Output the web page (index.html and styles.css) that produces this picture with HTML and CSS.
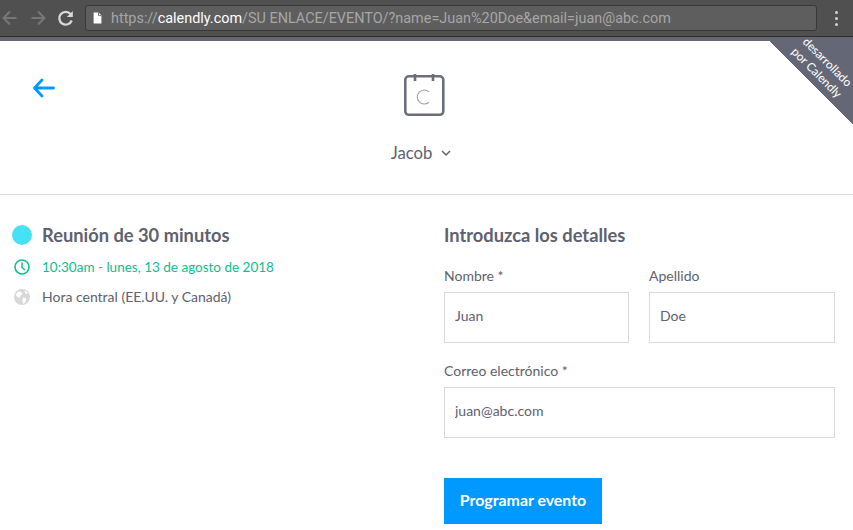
FILE: index.html
```html
<!DOCTYPE html>
<html lang="es">
<head>
<meta charset="utf-8">
<title>Calendly</title>
<link rel="stylesheet" href="styles.css">
</head>
<body>
<div class="chrome">
  <div class="toolbar">
    <svg class="nav" width="20" height="20" viewBox="0 0 20 20"><path d="M16.500 10H4M10 3.500 3.500 10l6.500 6.500" fill="none" stroke="#777" stroke-width="2"/></svg>
    <svg class="nav" width="20" height="20" viewBox="0 0 20 20"><path d="M3.500 10h12.500M10 3.500 16.500 10 10 16.500" fill="none" stroke="#777" stroke-width="2"/></svg>
    <svg class="nav reload" width="20" height="20" viewBox="0 0 20 20"><path d="M15.700 12.500a6.400 6.400 0 1 1-1-6.300" fill="none" stroke="#d8d8d8" stroke-width="2.300"/><path d="M16.800 3v6h-6z" fill="#d8d8d8"/></svg>
    <div class="omnibox">
      <svg class="file" width="9" height="12" viewBox="0 0 9 12"><path d="M.6.6h5L8.400 3.400v8H.6z" fill="#fff"/><path d="M5.500.6v3h2.900" fill="none" stroke="#555" stroke-width=".8"/></svg>
      <span class="url">https://<b>calendly.com</b>/SU ENLACE/EVENTO/?name=Juan%20Doe&amp;email=juan@abc.com</span>
    </div>
    <div class="menu"><i></i><i></i><i></i></div>
  </div>
  <div class="band"></div>
</div>

<main class="page">
  <a class="ribbon"><span>desarrollado<br>por Calendly</span></a>

  <header class="head">
    <svg class="back" width="24" height="20" viewBox="0 0 24 20"><path d="M21.500 10H3M10 2 2.500 10l7.500 8" fill="none" stroke="#0099ff" stroke-width="2.800" stroke-linecap="round" stroke-linejoin="round"/></svg>
    <svg class="logo" width="42" height="43" viewBox="0 0 42 43">
      <rect x="1.300" y="2.300" width="38" height="38.500" rx="3.500" fill="none" stroke="#6c6f7a" stroke-width="2.600"/>
      <path d="M11 0v7M29 0v7" stroke="#6c6f7a" stroke-width="2.600"/>
      <path d="M25 17.800a7 7 0 1 0 0 10.400" fill="none" stroke="#a3a5ad" stroke-width="1.200"/>
    </svg>
    <div class="owner">Jacob
      <svg width="10" height="7" viewBox="0 0 10 7"><path d="M1 1l4 4 4-4" fill="none" stroke="#5d6170" stroke-width="1.500"/></svg>
    </div>
  </header>

  <section class="content">
    <div class="summary">
      <h1 class="event"><span class="dot"></span>Reunión de 30 minutos</h1>
      <p class="line when">
        <svg width="18" height="18" viewBox="0 0 18 18"><circle cx="9" cy="9" r="7" fill="none" stroke="#0cc08e" stroke-width="1.600"/><path d="M9 4.500V9.500l3 2.500" fill="none" stroke="#0cc08e" stroke-width="1.500"/></svg>
        10:30am - lunes, 13 de agosto de 2018
      </p>
      <p class="line zone">
        <svg width="18" height="18" viewBox="0 0 18 18"><circle cx="9" cy="9" r="8" fill="#d8d8d8"/><path d="M5 3.500l3 .5 1.500 2-2 1.500-1 2.500-2-1-2-2zM10 9.500l3.500 1-1 3.500-2 2-1-3zM11 2.500l3 1.500 1 2-2.500-.5z" fill="#fff"/></svg>
        Hora central (EE.UU. y Canadá)
      </p>
    </div>

    <form class="details">
      <h2 class="title">Introduzca los detalles</h2>
      <div class="names">
        <label class="field">Nombre *<input class="input" value="Juan"></label>
        <label class="field">Apellido<input class="input" value="Doe"></label>
      </div>
      <label class="field">Correo electrónico *<input class="input" value="juan@abc.com"></label>
      <button class="submit" type="button">Programar evento</button>
    </form>
  </section>
</main>
</body>
</html>
```

FILE: styles.css
```css
* { box-sizing: border-box; }
html, body { margin: 0; height: 100%; }
body {
  width: 853px;
  height: 530px;
  overflow: hidden;
  background: #fff;
  font-family: Lato, "Open Sans", sans-serif;
  color: #5d6170;
}

.chrome { height: 41px; }
.toolbar {
  height: 37px;
  display: flex;
  align-items: center;
  background: #505050;
  border-bottom: 1px solid #2e2e2e;
}
.nav { flex: none; margin-right: 8px; }
.omnibox {
  width: 732px;
  height: 26px;
  margin-left: 1px;
  display: flex;
  align-items: center;
  gap: 9px;
  padding-left: 7px;
  background: #5e5e5e;
  border: 1px solid #383838;
  border-radius: 3px;
}
.url {
  font-family: Roboto, sans-serif;
  font-size: 14.420px;
  color: #a6a6a6;
  white-space: nowrap;
}
.url b { font-weight: 400; color: #fff; }
.menu {
  margin-left: 18px;
  display: flex;
  flex-direction: column;
  gap: 3px;
}
.menu i { width: 3px; height: 3px; background: #d4d4d4; border-radius: 50%; }
.band { height: 4px; background: #646876; }

.page { position: relative; height: 489px; }
.ribbon {
  position: absolute;
  top: -4px;
  right: 0;
  width: 87px;
  height: 87px;
  background: linear-gradient(to top right, transparent 50%, #646876 50%);
}
.ribbon span {
  position: absolute;
  top: 16px;
  left: 18px;
  width: 76px;
  transform: rotate(45deg);
  font-size: 11.800px;
  line-height: 14.500px;
  text-align: center;
  color: #fff;
}

.head {
  position: relative;
  height: 154px;
  border-bottom: 1px solid #d9d9d9;
  display: flex;
  flex-direction: column;
  align-items: center;
  padding-top: 33px;
}
.back { position: absolute; left: 32px; top: 37px; }
.logo { margin-right: 3px; }
.owner {
  margin-top: 26px;
  margin-right: 11px;
  font-size: 16.700px;
  line-height: 20px;
  display: flex;
  align-items: center;
  gap: 9px;
}

.content {
  display: grid;
  grid-template-columns: 444px 391px;
  padding-top: 29px;
}
.summary { padding-left: 12px; }
.event {
  margin: 0;
  display: flex;
  align-items: center;
  gap: 10px;
  font-size: 18.300px;
  font-weight: 700;
  line-height: 22px;
}
.dot { width: 20px; height: 20px; border-radius: 50%; background: #47e1f5; }
.line {
  margin: 0;
  display: flex;
  align-items: center;
  gap: 11px;
  line-height: 18px;
}
.line svg { margin-left: 1px; flex: none; }
.when { margin-top: 12px; color: #0cc08e; font-size: 13.500px; }
.zone { margin-top: 12px; font-size: 14px; }

.title {
  margin: 0 0 20px;
  font-size: 18.300px;
  font-weight: 700;
  line-height: 22px;
}
.names { display: grid; grid-template-columns: 185px 186px; gap: 20px; margin-bottom: 18px; }
.field { display: block; font-size: 14px; line-height: 20px; }
.input {
  display: block;
  width: 100%;
  height: 51px;
  margin-top: 6px;
  padding: 0 10px 5px;
  border: 1px solid #d9d9d9;
  border-radius: 0;
  background: #fff;
  font: 14px Lato, sans-serif;
  color: #5d6170;
  outline: none;
}
.submit {
  display: block;
  width: 158px;
  height: 46px;
  margin-top: 40px;
  padding: 0 0 4px;
  border: 0;
  background: #0099ff;
  color: #fff;
  font: 700 15.900px Lato, sans-serif;
}
```
